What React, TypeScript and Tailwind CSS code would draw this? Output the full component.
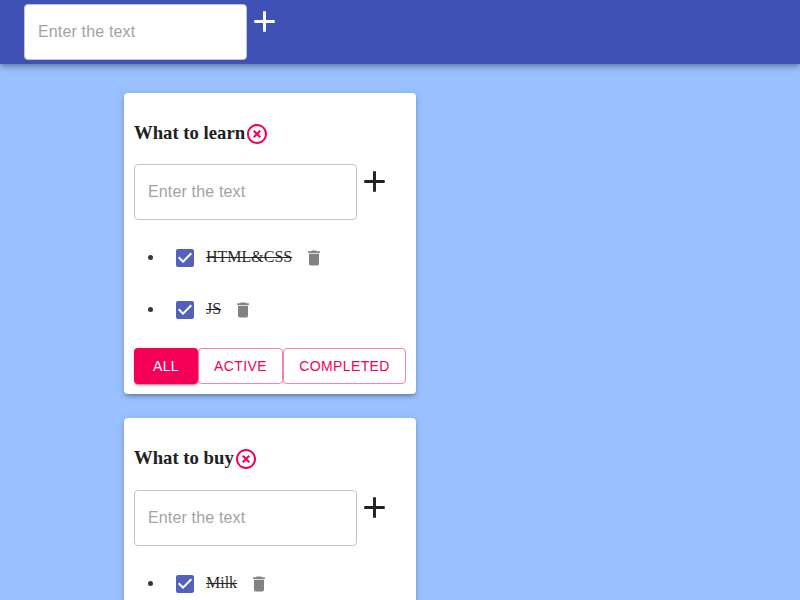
import React from "react";

const ADD = "M19 13h-6v6h-2v-6H5v-2h6V5h2v6h6v2z";
const REMOVE =
  "M14.59 8L12 10.59 9.41 8 8 9.41 10.59 12 8 14.59 9.41 16 12 13.41 14.59 16 16 14.59 13.41 12 16 9.41 14.59 8zM12 2C6.47 2 2 6.47 2 12s4.47 10 10 10 10-4.47 10-10S17.53 2 12 2zm0 18c-4.41 0-8-3.59-8-8s3.59-8 8-8 8 3.59 8 8-3.59 8-8 8z";
const TRASH = "M6 19c0 1.1.9 2 2 2h8c1.1 0 2-.9 2-2V7H6v12zM19 4h-3.5l-1-1h-5l-1 1H5v2h14V4z";
const CHECKED =
  "M19 3H5c-1.11 0-2 .9-2 2v14c0 1.1.89 2 2 2h14c1.11 0 2-.9 2-2V5c0-1.1-.89-2-2-2zm-9 14l-5-5 1.41-1.41L10 14.17l7.59-7.59L19 8l-9 9z";

function Icon({ path, className }: { path: string; className: string }) {
  return (
    <svg viewBox="0 0 24 24" fill="currentColor" className={`shrink-0 ${className}`}>
      <path d={path} />
    </svg>
  );
}

function AddItemForm({ iconColor }: { iconColor: string }) {
  return (
    <div className="flex items-start">
      <input
        placeholder="Enter the text"
        className="h-14 w-[223px] rounded border border-[#c4c4c4] bg-white px-[13px] text-base tracking-[0.00938em] text-black/85 outline-none placeholder:text-[#a3a3a3]"
      />
      <button className={iconColor}>
        <Icon path={ADD} className="block size-[35px]" />
      </button>
    </div>
  );
}

function Task({ title }: { title: string }) {
  return (
    <li className="flex h-[52px] items-center opacity-90">
      <span className="-mt-[1px] ml-[14px] size-[5px] rounded-full bg-[#212121]" />
      <Icon path={CHECKED} className="ml-5 size-6 text-[#3f51b5]" />
      <span className="ml-[9px] -mt-[2px] font-['Liberation_Serif',serif] text-base leading-5 text-[#111] line-through">
        {title}
      </span>
      <Icon path={TRASH} className="ml-3 size-5 text-[#757575]" />
    </li>
  );
}

const buttonBase =
  "flex h-9 items-center justify-center rounded pb-px text-sm tracking-[0.02857em] uppercase";

function TodoList({ title, tasks }: { title: string; tasks: string[] }) {
  return (
    <section className="h-[301.4px] w-[292px] shrink-0 rounded bg-white px-2.5 shadow-[0px_3px_3px_-2px_rgba(0,0,0,0.2),0px_3px_4px_0px_rgba(0,0,0,0.14),0px_1px_8px_0px_rgba(0,0,0,0.12)]">
      <h3 className="flex h-[71.2px] items-start pt-[29px] font-['Liberation_Serif',serif] text-[18.72px] leading-[22px] font-bold text-[#212121]">
        <span>{title}</span>
        <button className="text-[#f50057]">
          <Icon path={REMOVE} className="block size-6" />
        </button>
      </h3>
      <AddItemForm iconColor="text-[#212121]" />
      <ul className="pt-3">
        {tasks.map((task) => (
          <Task key={task} title={task} />
        ))}
      </ul>
      <div className="mt-3 flex">
        <button
          className={`${buttonBase} w-16 bg-[#f50057] text-white shadow-[0px_3px_1px_-2px_rgba(0,0,0,0.2),0px_2px_2px_0px_rgba(0,0,0,0.14),0px_1px_5px_0px_rgba(0,0,0,0.12)]`}
        >
          All
        </button>
        <button className={`${buttonBase} w-[85px] border border-[#f50057]/50 text-[#f50057]`}>
          Active
        </button>
        <button className={`${buttonBase} w-[123px] border border-[#f50057]/50 text-[#f50057]`}>
          Completed
        </button>
      </div>
    </section>
  );
}

export default function App() {
  return (
    <div className="flex h-screen flex-col overflow-hidden bg-[#9ac1ff] font-['Liberation_Sans',Arial,sans-serif]">
      <header className="h-16 shrink-0 bg-[#3f51b5] px-6 pt-1 shadow-[0px_2px_4px_-1px_rgba(0,0,0,0.2),0px_4px_5px_0px_rgba(0,0,0,0.14),0px_1px_10px_0px_rgba(0,0,0,0.12)]">
        <AddItemForm iconColor="text-white" />
      </header>
      <main className="flex flex-col gap-6 pt-[29px] pl-[124px]">
        <TodoList title="What to learn" tasks={["HTML&CSS", "JS"]} />
        <TodoList title="What to buy" tasks={["Milk"]} />
      </main>
    </div>
  );
}
